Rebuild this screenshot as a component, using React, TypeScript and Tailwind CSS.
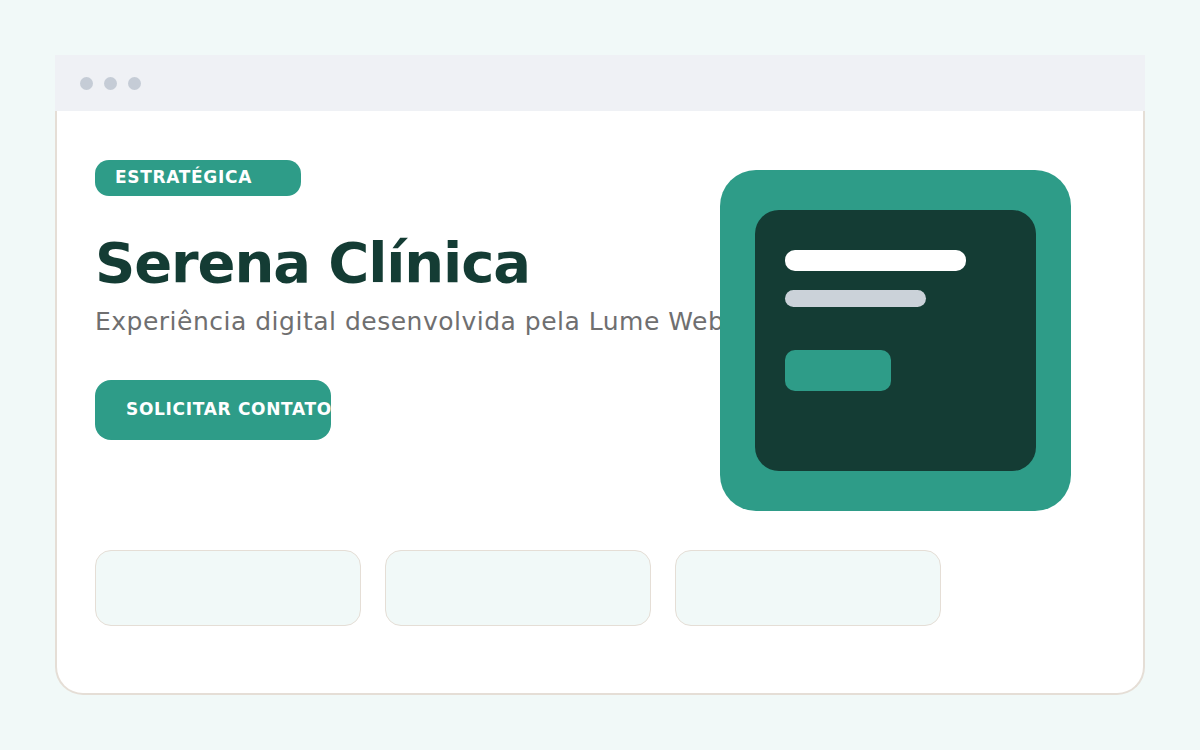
import React from "react";

const font = { fontFamily: '"DejaVu Sans", sans-serif' };

const Dot = () => <span className="block h-[13px] w-[13px] rounded-full bg-[#c5ccd6]" />;

const MiniCard = () => (
  <div className="h-[76px] w-[266px] rounded-[16px] border border-[#e5ded6] bg-[#f1f9f8]" />
);

// mock screen shown beside the hero text
const Preview = () => (
  <div className="relative z-10 flex h-[341px] w-[351px] shrink-0 items-start justify-center rounded-[36px] bg-[#2e9c88] pt-[40px]">
    <div className="flex h-[261px] w-[281px] flex-col rounded-[24px] bg-[#143c34] px-[30px] pt-[40px]">
      <div className="h-[21px] w-[181px] rounded-[10px] bg-white" />
      <div className="mt-[19px] h-[17px] w-[141px] rounded-full bg-[#cbd2d9]" />
      <div className="mt-[43px] h-[41px] w-[106px] rounded-[10px] bg-[#2e9c88]" />
    </div>
  </div>
);

export default function App() {
  return (
    <div className="min-h-[750px] w-full bg-[#f1f9f8] px-[55px] pt-[55px]" style={font}>
      <div className="flex w-[1090px] flex-col">
        <div className="flex h-[56px] items-center gap-[11px] bg-[#eff1f5] pl-[25px]">
          <Dot />
          <Dot />
          <Dot />
        </div>
        <div className="h-[584px] rounded-b-[28px] border-2 border-t-0 border-[#e5ded6] bg-white pl-[38px] pt-[49px]">
          <div className="flex">
            <div className="w-[625px] shrink-0">
              <div className="flex h-[36px] w-[206px] items-center rounded-[14px] bg-[#2e9c88] pl-[20px] text-[17px] font-bold tracking-[0.04em] text-white">
                ESTRATÉGICA
              </div>
              <h1 className="mt-[35px] whitespace-nowrap text-[56px] font-bold leading-[64px] tracking-[-0.02em] text-[#143c34]">
                Serena Clínica
              </h1>
              <p className="mt-[9px] whitespace-nowrap text-[25px] leading-[36px] tracking-[0.5px] text-[#6f6f70]">
                Experiência digital desenvolvida pela Lume Web
              </p>
              <div className="mt-[40px] flex h-[60px] w-[236px] items-center overflow-hidden whitespace-nowrap rounded-[16px] bg-[#2e9c88] pl-[31px] text-[17px] font-bold tracking-[0.04em] text-white">
                SOLICITAR CONTATO
              </div>
            </div>
            <div className="mt-[10px]">
              <Preview />
            </div>
          </div>
          <div className="mt-[39px] flex gap-[24px]">
            <MiniCard />
            <MiniCard />
            <MiniCard />
          </div>
        </div>
      </div>
    </div>
  );
}
